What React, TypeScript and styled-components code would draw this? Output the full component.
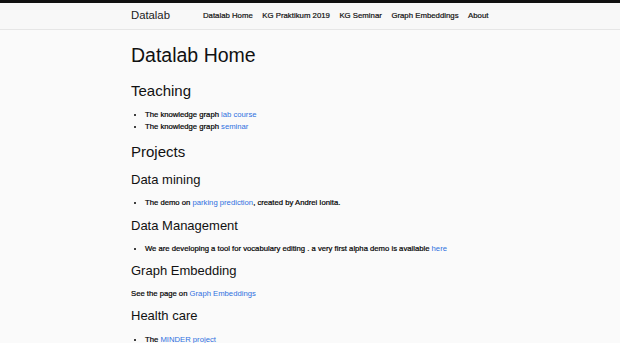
import styled, { createGlobalStyle } from "styled-components";

const GlobalStyle = createGlobalStyle`
  html, body {
    margin: 0;
    padding: 0;
    background: #fafafa;
    font-family: "Liberation Sans", Arial, sans-serif;
    color: #111;
  }
`;

const TopBar = styled.header`
  border-top: 3px solid #111;
  background: #f8f8f8;
  border-bottom: 1px solid #e6e6e6;
  height: 26px;
`;

const Container = styled.div`
  width: 358px;
  margin: 0 auto;
`;

const NavInner = styled(Container)`
  display: flex;
  align-items: center;
  height: 100%;
`;

const Brand = styled.a`
  font-size: 11.3px;
  line-height: 1.2;
  color: #222;
  text-decoration: none;
  margin-top: -1px;
  white-space: nowrap;
  flex-shrink: 0;
`;

const NavList = styled.ul`
  display: flex;
  gap: 9.5px;
  list-style: none;
  margin: 0 0 0 33px;
  padding: 0;
  font-size: 7.8px;
  line-height: 1.2;
  white-space: nowrap;
  flex-shrink: 0;
`;

const NavLink = styled.a`
  color: #111;
  text-decoration: none;
  -webkit-text-stroke: 0.2px currentColor;
`;

const Main = styled(Container)`
  padding-top: 14.5px;
`;

const Title = styled.h1`
  font-size: 19.5px;
  font-weight: normal;
  line-height: 1.1;
  margin: 0 0 17.5px;
`;

const Section = styled.h2`
  font-size: 15px;
  font-weight: normal;
  line-height: 1.1;
  margin: 11px 0 9.5px;
`;

const Sub = styled.h3`
  font-size: 13px;
  font-weight: normal;
  line-height: 1.1;
  margin: 9.5px 0 10.5px;

  ${Section} + & {
    margin-top: 12.5px;
  }
`;

const List = styled.ul`
  margin: 0;
  padding-left: 14px;
  font-size: 7.7px;
  line-height: 11.6px;
  color: #000;
  -webkit-text-stroke: 0.2px currentColor;
`;

const Para = styled.p`
  margin: -1.5px 0 0;
  font-size: 7.7px;
  line-height: 11.6px;
  color: #000;
  -webkit-text-stroke: 0.2px currentColor;
`;

const Link = styled.a`
  color: #2f70e0;
  text-decoration: none;
  -webkit-text-stroke: 0;
`;

const navItems = ["Datalab Home", "KG Praktikum 2019", "KG Seminar", "Graph Embeddings", "About"];

export default function App() {
  return (
    <>
      <GlobalStyle />
      <TopBar>
        <NavInner>
          <Brand href="#">Datalab</Brand>
          <NavList>
            {navItems.map((n) => (
              <li key={n}>
                <NavLink href="#">{n}</NavLink>
              </li>
            ))}
          </NavList>
        </NavInner>
      </TopBar>
      <Main>
        <Title>Datalab Home</Title>
        <Section style={{ marginTop: 0 }}>Teaching</Section>
        <List>
          <li>The knowledge graph <Link href="#">lab course</Link></li>
          <li>The knowledge graph <Link href="#">seminar</Link></li>
        </List>
        <Section>Projects</Section>
        <Sub>Data mining</Sub>
        <List>
          <li>The demo on <Link href="#">parking prediction</Link>, created by Andrei Ionita.</li>
        </List>
        <Sub>Data Management</Sub>
        <List>
          <li>We are developing a tool for vocabulary editing . a very first alpha demo is available <Link href="#">here</Link></li>
        </List>
        <Sub>Graph Embedding</Sub>
        <Para>See the page on <Link href="#">Graph Embeddings</Link></Para>
        <Sub>Health care</Sub>
        <List>
          <li>The <Link href="#">MINDER project</Link></li>
        </List>
      </Main>
    </>
  );
}
